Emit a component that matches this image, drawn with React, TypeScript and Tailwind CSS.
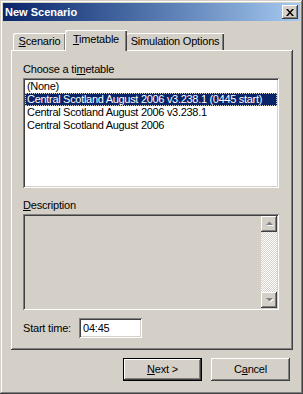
import React from "react";

// classic 3d edges
const raised =
  "shadow-[inset_-1px_-1px_#404040,inset_1px_1px_#ffffff,inset_-2px_-2px_#808080,inset_2px_2px_#d4d0c8]";
const sunken =
  "shadow-[inset_1px_1px_#808080,inset_-1px_-1px_#ffffff,inset_2px_2px_#404040,inset_-2px_-2px_#d4d0c8]";

const items = [
  "(None)",
  "Central Scotland August 2006 v3.238.1 (0445 start)",
  "Central Scotland August 2006 v3.238.1",
  "Central Scotland August 2006",
];

function ScrollArrow({ up }: { up?: boolean }) {
  return (
    <div className={`w-[16px] h-[16px] bg-[#d4d0c8] flex items-center justify-center ${raised}`}>
      <svg width="9" height="6" viewBox="0 0 9 6">
        {up ? (
          <>
            <path d="M2 5h7L5.5 1.5z" fill="#ffffff" />
            <path d="M1 4h7L4.5 0.5z" fill="#808080" />
          </>
        ) : (
          <>
            <path d="M2 2h7L5.5 5.5z" fill="#ffffff" />
            <path d="M1 1h7L4.5 4.5z" fill="#808080" />
          </>
        )}
      </svg>
    </div>
  );
}

function App() {
  return (
    <div
      className={`w-[303px] h-[394px] bg-[#d4d0c8] p-[3px] flex flex-col text-[11px] leading-[13px] tracking-[-0.2px] text-black shadow-[inset_-1px_-1px_#404040,inset_1px_1px_#d4d0c8,inset_-2px_-2px_#808080,inset_2px_2px_#ffffff]`}
      style={{ fontFamily: '"Liberation Sans", Arial, sans-serif' }}
    >
      {/* title bar */}
      <div className="h-[18px] flex items-center justify-between pl-[2px] pr-[2px] bg-linear-to-r from-[#0a246a] to-[#a6caf0]">
        <span className="text-white font-bold text-[11px] tracking-normal">New Scenario</span>
        <div className={`w-[16px] h-[14px] bg-[#d4d0c8] flex items-center justify-center ${raised}`}>
          <svg width="8" height="7" viewBox="0 0 8 7">
            <path d="M0 0h2l2 2.5L6 0h2L5 3.5 8 7H6L4 4.5 2 7H0l3-3.5z" fill="#000" />
          </svg>
        </div>
      </div>

      {/* tabs */}
      <div className="mt-[9px] ml-[8px] h-[20px] flex items-end pl-[2px]">
        <div className="w-[53px] h-[17px] flex items-center justify-center shadow-[inset_1px_1px_#ffffff,inset_-1px_0_#404040,inset_-2px_0_#808080] rounded-tl-[2px]">
          <span>
            <u>S</u>cenario
          </span>
        </div>
        <div className="relative z-10 -mb-[1px] -ml-[1px] w-[62px] h-[21px] bg-[#d4d0c8] flex items-start pt-[3px] justify-center shadow-[inset_1px_1px_#ffffff,inset_-1px_0_#404040,inset_-2px_0_#808080] rounded-tl-[2px]">
          <span>
            <u>T</u>imetable
          </span>
        </div>
        <div className="-ml-[1px] w-[98px] h-[17px] flex items-center justify-center shadow-[inset_1px_1px_#ffffff,inset_-1px_0_#404040,inset_-2px_0_#808080] rounded-tl-[2px]">
          <span>Simulation Options</span>
        </div>
      </div>

      {/* panel */}
      <div className={`ml-[8px] w-[282px] h-[300px] pt-[13px] pl-[12px] ${raised} flex flex-col`}>
        <div className="h-[13px]">
          Choose a ti<u>m</u>etable
        </div>
        <div className={`mt-[2px] w-[256px] h-[110px] bg-white p-[2px] ${sunken}`}>
          {items.map((t, i) => (
            <div
              key={t}
              className={`h-[13px] pl-[2px] whitespace-nowrap tracking-[-0.3px] ${
                i === 1
                  ? "bg-[#0a246a] text-white outline-1 outline-dotted outline-[#d4d0c8] -outline-offset-1"
                  : ""
              }`}
            >
              {t}
            </div>
          ))}
        </div>

        <div className="mt-[11px] h-[13px]">
          <u>D</u>escription
        </div>
        <div className={`mt-[2px] w-[256px] h-[96px] p-[2px] flex justify-end ${sunken}`}>
          <div className="w-[16px] h-full flex flex-col">
            <ScrollArrow up />
            <div className="flex-1 bg-[image:repeating-conic-gradient(#ffffff_0_25%,#d4d0c8_0_50%)] bg-[length:2px_2px]" />
            <ScrollArrow />
          </div>
        </div>

        <div className="mt-[8px] flex items-center h-[20px]">
          <span className="w-[56px]">Start time:</span>
          <div className={`w-[63px] h-[20px] bg-white pl-[4px] flex items-center ${sunken}`}>04:45</div>
        </div>
      </div>

      {/* buttons */}
      <div className="mt-[8px] flex justify-end gap-[9px] pr-[10px]">
        <div className="w-[79px] h-[23px] border border-black">
          <div className={`w-full h-full flex items-center justify-center ${raised}`}>
            <span>
              <u>N</u>ext &gt;
            </span>
          </div>
        </div>
        <div className={`w-[79px] h-[23px] flex items-center justify-center ${raised}`}>
          <span>
            C<u>a</u>ncel
          </span>
        </div>
      </div>
    </div>
  );
}

export default App;
